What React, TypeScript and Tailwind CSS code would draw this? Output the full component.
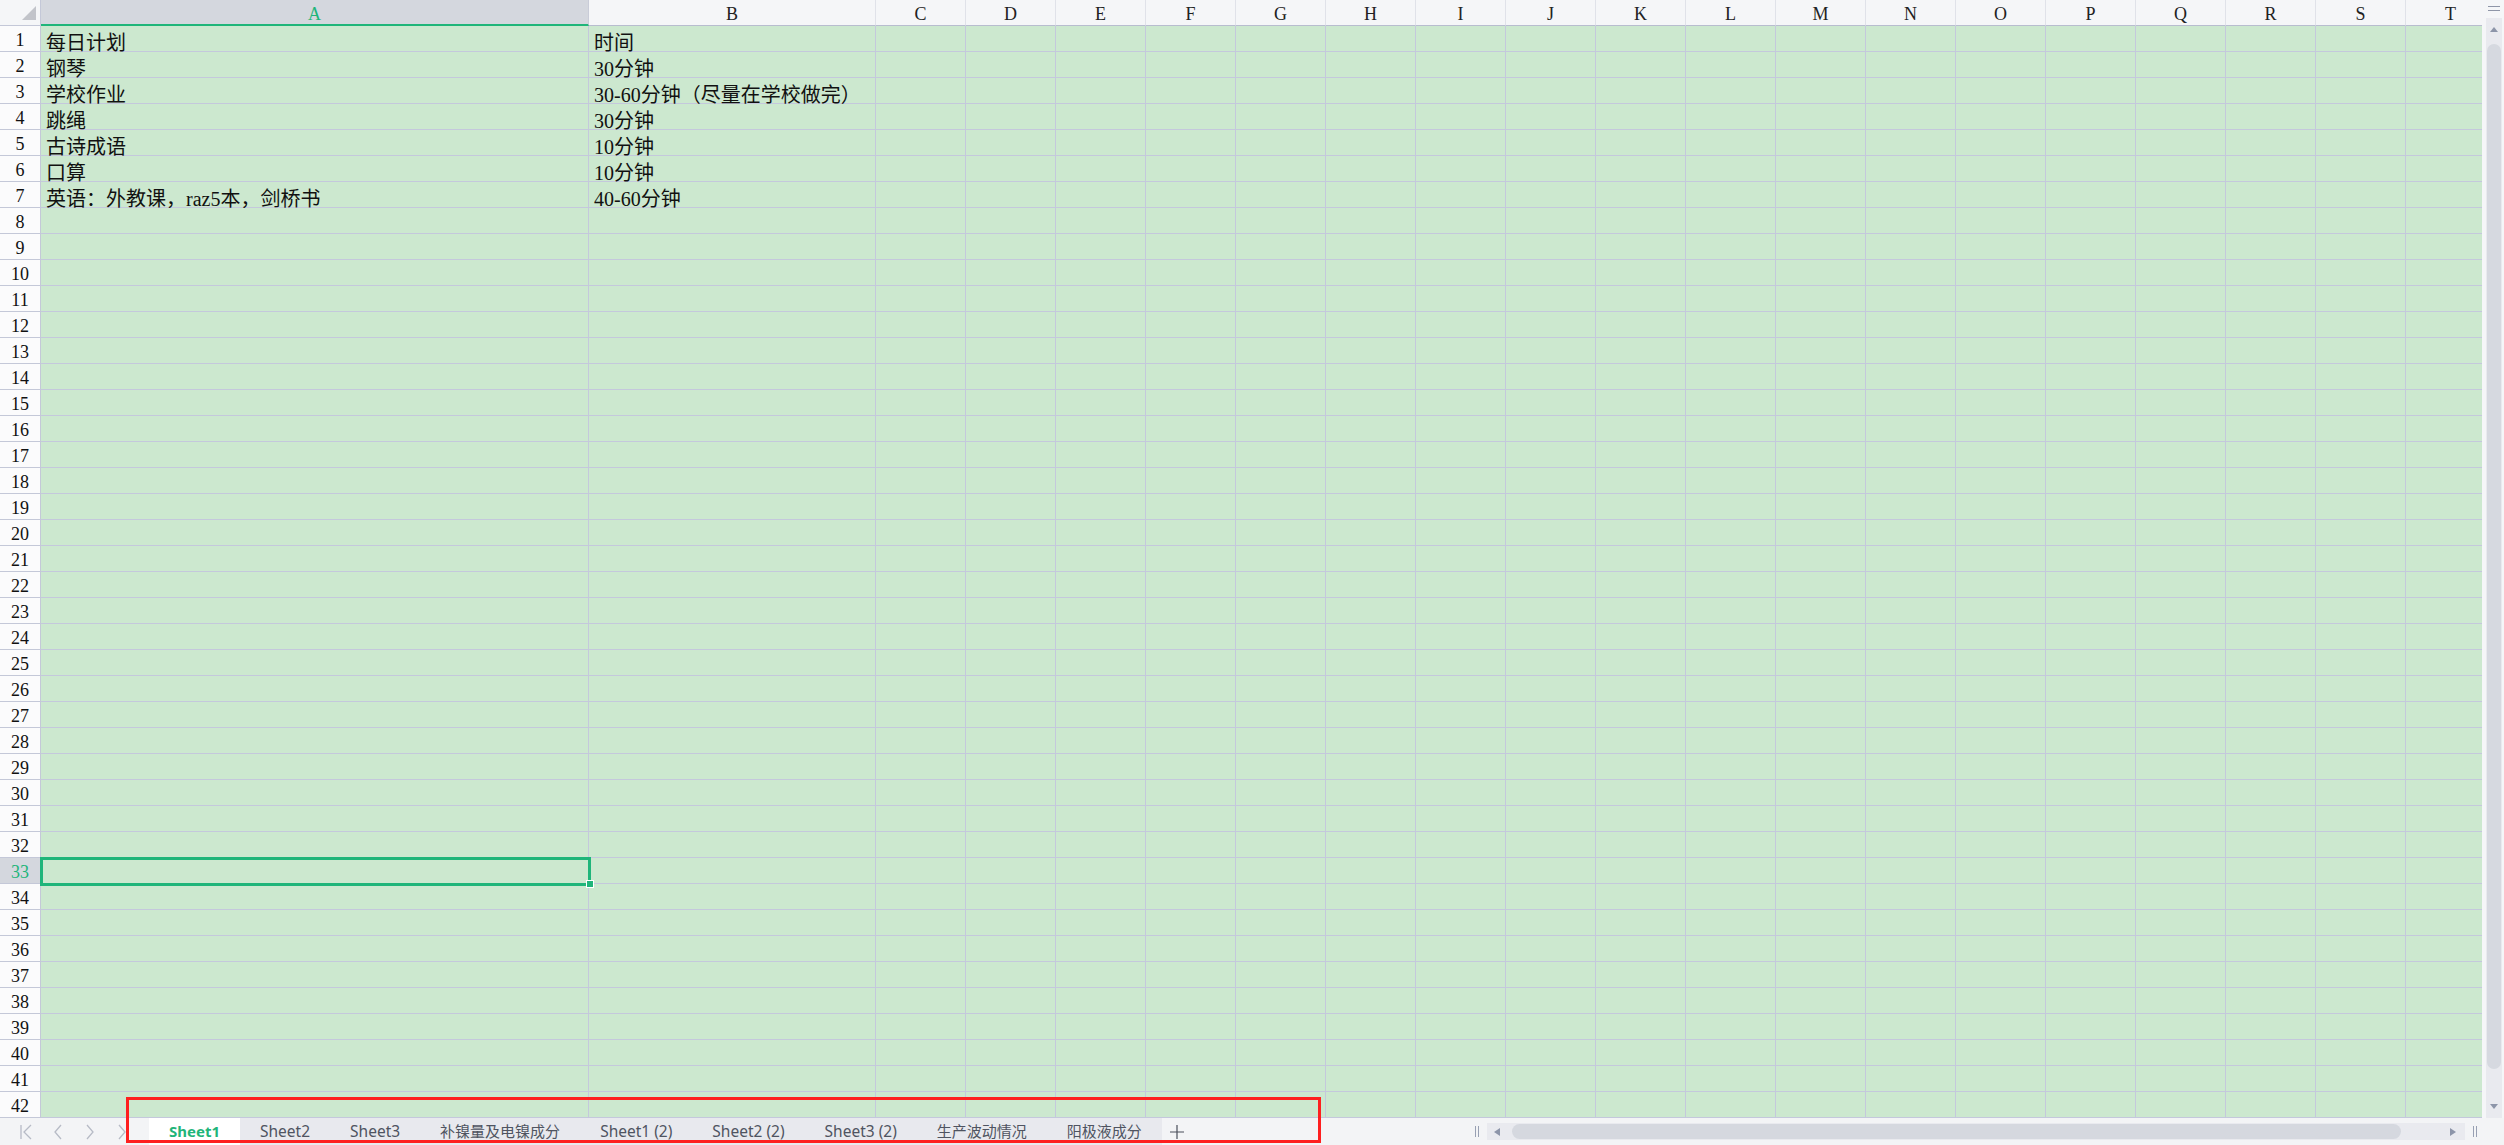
import { Fragment } from "react";

const COLS = ["A", "B", "C", "D", "E", "F", "G", "H", "I", "J", "K", "L", "M", "N", "O", "P", "Q", "R", "S", "T"];
const ROWS = Array.from({ length: 42 }, (_, i) => i + 1);

const data: Record<number, [string, string]> = {
  1: ["每日计划", "时间"],
  2: ["钢琴", "30分钟"],
  3: ["学校作业", "30-60分钟（尽量在学校做完）"],
  4: ["跳绳", "30分钟"],
  5: ["古诗成语", "10分钟"],
  6: ["口算", "10分钟"],
  7: ["英语：外教课，raz5本，剑桥书", "40-60分钟"],
};

const tabs = [
  { name: "Sheet1", latin: true },
  { name: "Sheet2", latin: true },
  { name: "Sheet3", latin: true },
  { name: "补镍量及电镍成分", latin: false },
  { name: "Sheet1 (2)", latin: true },
  { name: "Sheet2 (2)", latin: true },
  { name: "Sheet3 (2)", latin: true },
  { name: "生产波动情况", latin: false },
  { name: "阳极液成分", latin: false },
];

const SELECTED_ROW = 33;

function NavIcon({ kind }: { kind: "first" | "prev" | "next" | "last" }) {
  return (
    <div className="flex w-[32px] items-center justify-center">
      <svg width="14" height="16" viewBox="0 0 14 16" fill="none" stroke="#b7bbc6" strokeWidth="1.3">
        {kind === "first" && (
          <>
            <path d="M2 1v14" />
            <path d="M12 1L5 8l7 7" />
          </>
        )}
        {kind === "prev" && <path d="M10 1L4 8l6 7" />}
        {kind === "next" && <path d="M4 1l6 7-6 7" />}
        {kind === "last" && <path d="M4 1l6 7-6 7" />}
      </svg>
    </div>
  );
}

function SheetGrid() {
  return (
    <div className="grid w-[2496px] grid-cols-[41px_548px_287px_repeat(18,90px)] auto-rows-[26px]">
      <div className="relative border-b border-r border-[#c4c8d8] bg-[#f5f6f8]">
        <svg className="absolute left-[22px] top-[6px]" width="15" height="15" viewBox="0 0 15 15">
          <polygon points="14,0 14,14 0,14" fill="#c2c4ca" />
        </svg>
      </div>
      {COLS.map((c) =>
        c === "A" ? (
          <div
            key={c}
            className="border-b-2 border-r border-b-[#1fb57a] border-r-[#c9ccd8] bg-[#d4d7de] pt-[4px] text-center font-['Liberation_Serif',serif] text-[18px] leading-[21px] text-[#1fb57a]"
          >
            {c}
          </div>
        ) : (
          <div
            key={c}
            className="border-b border-r border-b-[#b8bdcf] border-r-[#e0e2e9] bg-[#f5f6f8] pt-[4px] text-center font-['Liberation_Serif',serif] text-[18px] leading-[21px] text-[#222]"
          >
            {c}
          </div>
        ),
      )}
      {ROWS.map((r) => (
        <Fragment key={r}>
          <div
            className={
              r === SELECTED_ROW
                ? "border-b border-r border-[#c4c8d8] bg-[#d4d7de] pt-[3px] text-center font-['Liberation_Serif',serif] text-[18px] leading-[22px] text-[#1fb57a]"
                : "border-b border-r border-[#c4c8d8] bg-[#fbfbfc] pt-[3px] text-center font-['Liberation_Serif',serif] text-[18px] leading-[22px] text-[#111]"
            }
          >
            {r}
          </div>
          {COLS.map((c, i) => (
            <div
              key={c}
              className="whitespace-nowrap border-b border-r border-[#c4c8dc] bg-[#cce8cf] px-[5px] pt-[8px] font-['Liberation_Serif','Noto_Sans_CJK_SC',serif] text-[20px] leading-[18px] text-[#111]"
            >
              {i < 2 ? data[r]?.[i] : null}
            </div>
          ))}
        </Fragment>
      ))}
    </div>
  );
}

function VerticalScroll() {
  return (
    <div className="flex w-[22px] shrink-0 flex-col bg-[#f5f6f8] pl-[4px] pr-[2px]">
      <div className="flex h-[18px] flex-col items-center justify-center gap-[3px] pb-[2px]">
        <div className="h-px w-[12px] bg-[#8f96a8]" />
        <div className="h-px w-[12px] bg-[#8f96a8]" />
      </div>
      <div className="flex flex-1 flex-col items-center bg-[#e9eaef]">
        <svg className="mt-[9px]" width="8" height="5" viewBox="0 0 8 5">
          <polygon points="4,0 8,5 0,5" fill="#8d95a9" />
        </svg>
        <div className="mt-[12px] h-[1025px] w-[14px] rounded-full bg-[#d6d9e0]" />
        <svg className="mb-[9px] mt-auto" width="8" height="5" viewBox="0 0 8 5">
          <polygon points="0,0 8,0 4,5" fill="#8d95a9" />
        </svg>
      </div>
    </div>
  );
}

function BottomBar() {
  return (
    <div className="flex h-[27px] items-stretch bg-[#f3f4f6]">
      <div className="flex w-[149px] items-center pl-[10px]">
        <NavIcon kind="first" />
        <NavIcon kind="prev" />
        <NavIcon kind="next" />
        <NavIcon kind="last" />
      </div>
      <div className="flex bg-[#e8e9ee] font-['Noto_Sans','Noto_Sans_CJK_SC',sans-serif]">
        {tabs.map((t, i) =>
          i === 0 ? (
            <div key={t.name} className="flex items-center bg-white px-[20px] text-[15px] font-bold text-[#1fb57a]">
              {t.name}
            </div>
          ) : (
            <div
              key={t.name}
              className={
                t.latin
                  ? "flex items-center whitespace-nowrap px-[20px] text-[15.5px] text-[#4f5461]"
                  : "flex items-center whitespace-nowrap px-[20px] text-[15px] text-[#4f5461]"
              }
            >
              {t.name}
            </div>
          ),
        )}
      </div>
      <div className="ml-[7px] flex items-center">
        <svg width="16" height="16" viewBox="0 0 16 16" stroke="#4a4f5a" strokeWidth="1.2">
          <path d="M8 1v14M1 8h14" />
        </svg>
      </div>
      <div className="flex-1" />
      <div className="flex items-center gap-[8px] pr-[27px]">
        <div className="flex h-[11px] gap-[2px]">
          <div className="w-px bg-[#98a0b3]" />
          <div className="w-px bg-[#98a0b3]" />
        </div>
        <div className="flex h-[17px] w-[978px] items-center bg-[#e9eaef] pl-[7px]">
          <svg width="6" height="8" viewBox="0 0 6 8">
            <polygon points="6,0 6,8 0,4" fill="#8d95a9" />
          </svg>
          <div className="ml-[12px] h-[15px] w-[889px] rounded-full bg-[#d5d8df]" />
          <svg className="ml-[49px]" width="6" height="8" viewBox="0 0 6 8">
            <polygon points="0,0 0,8 6,4" fill="#8d95a9" />
          </svg>
        </div>
        <div className="flex h-[11px] gap-[2px]">
          <div className="w-px bg-[#98a0b3]" />
          <div className="w-px bg-[#98a0b3]" />
        </div>
      </div>
    </div>
  );
}

export default function App() {
  return (
    <div className="relative flex h-[1145px] w-[2504px] flex-col overflow-hidden bg-white">
      <div className="flex h-[1118px]">
        <div className="relative flex-1 overflow-hidden">
          <SheetGrid />
          <div className="pointer-events-none absolute left-[40px] top-[857px] h-[29px] w-[551px] border-[3px] border-[#1fb57a]" />
          <div className="pointer-events-none absolute left-[586px] top-[880px] h-[8px] w-[8px] border border-white bg-[#1fb57a]" />
        </div>
        <VerticalScroll />
      </div>
      <BottomBar />
      <div className="pointer-events-none absolute left-[126px] top-[1097px] h-[46px] w-[1195px] border-[3px] border-[#fe1f1f]" />
    </div>
  );
}
